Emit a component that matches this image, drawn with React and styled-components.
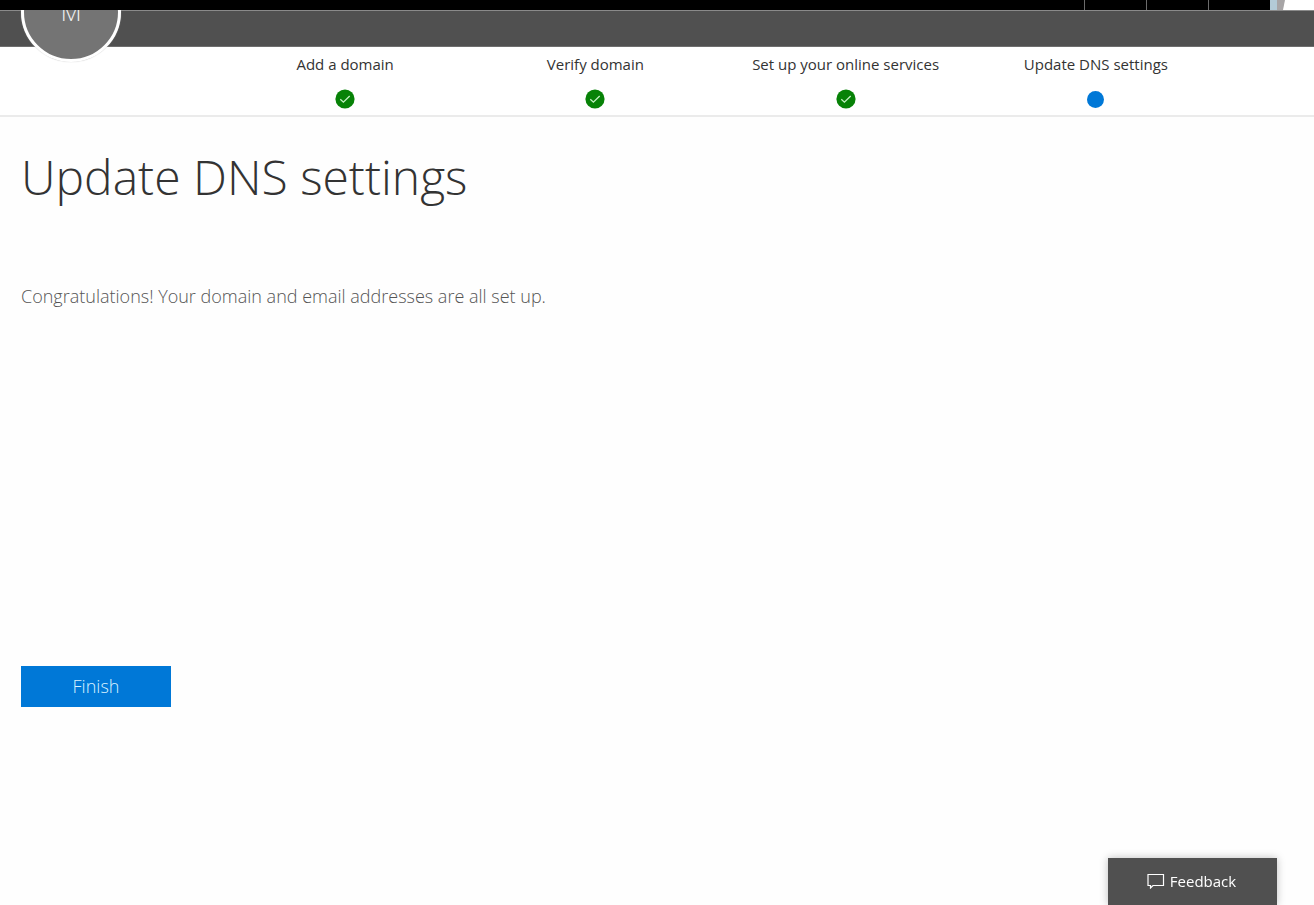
import styled, { createGlobalStyle } from "styled-components";

const steps = [
  { label: "Add a domain", done: true },
  { label: "Verify domain", done: true },
  { label: "Set up your online services", done: true },
  { label: "Update DNS settings", done: false },
];

export default function App() {
  return (
    <>
      <GlobalStyle />
      <TopBar>
        <TopCell />
        <TopCell />
        <TopCell />
        <TopPhoto viewBox="0 0 44 10" aria-hidden="true">
          <rect width="44" height="10" fill="#fff" />
          <rect width="7" height="10" fill="#b3cbd7" />
          <path d="M7 0H15Q14 5 13 10H7Z" fill="#a7a5a6" />
        </TopPhoto>
      </TopBar>
      <BrandBar>
        <Avatar>M</Avatar>
      </BrandBar>
      <Steps>
        {steps.map((step) => (
          <Step key={step.label}>
            {step.label}
            <Marker>
              {step.done ? <DoneIcon /> : <CurrentDot />}
            </Marker>
          </Step>
        ))}
      </Steps>
      <Main>
        <Title>Update DNS settings</Title>
        <Message>
          Congratulations! Your domain and email addresses are all set up.
        </Message>
        <FinishButton type="button">Finish</FinishButton>
      </Main>
      <FeedbackButton type="button">
        <FeedbackIcon />
        Feedback
      </FeedbackButton>
    </>
  );
}

function DoneIcon() {
  return (
    <svg width="20" height="20" viewBox="0 0 20 20" aria-hidden="true">
      <circle cx="10" cy="10" r="9.6" fill="#078207" />
      <path d="M5.3 10.3L8.4 13.2L14.7 7" fill="none" stroke="#c4f0c4" strokeWidth="1.3" />
    </svg>
  );
}

function FeedbackIcon() {
  return (
    <svg width="18" height="16" viewBox="0 0 18 16" aria-hidden="true">
      <path
        d="M1 1.5H16.5V12.5H6L3.5 15V12.5H1Z"
        fill="none"
        stroke="#fff"
        strokeWidth="1.2"
      />
    </svg>
  );
}

const GlobalStyle = createGlobalStyle`
  * {
    box-sizing: border-box;
  }
  body {
    margin: 0;
    background-color: #fefefe;
    color: #333;
    font-family: "Open Sans", "Noto Sans", sans-serif;
  }
`;

const TopBar = styled.div`
  position: relative;
  z-index: 2;
  display: flex;
  justify-content: flex-end;
  height: 10px;
  background-color: #000;
`;

const TopCell = styled.div`
  width: 62px;
  border-left: 1px solid #6b6b6b;
`;

const TopPhoto = styled.svg`
  width: 44px;
  height: 10px;
`;

const BrandBar = styled.div`
  position: relative;
  z-index: 1;
  height: 37px;
  background-color: #505050;
  border-top: 1px solid #8a8a8a;
  border-bottom: 1px solid #6e6e6e;
`;

/* hangs out of the bar, its top half slides under the black one */
const Avatar = styled.div`
  position: absolute;
  left: 21px;
  bottom: -16px;
  width: 100px;
  height: 100px;
  display: flex;
  align-items: center;
  justify-content: center;
  border: 3px solid #fff;
  border-radius: 50%;
  background-color: #747474;
  box-shadow: 0 0 1px #bbb;
  color: #f2f2f2;
  font-size: 24px;
  font-weight: 350;
  line-height: 24px;
`;

const Steps = styled.ol`
  display: grid;
  grid-template-columns: repeat(4, 1fr);
  margin: 0;
  padding: 7px 93px 6px 220px;
  list-style: none;
  background-color: #fff;
  border-bottom: 2px solid #ebebeb;
`;

const Step = styled.li`
  display: flex;
  flex-direction: column;
  align-items: center;
  gap: 15px;
  font-size: 15px;
  line-height: 20px;
`;

const Marker = styled.span`
  display: flex;
  align-items: center;
  justify-content: center;
  height: 20px;
`;

const CurrentDot = styled.span`
  width: 17px;
  height: 17px;
  border-radius: 50%;
  background-color: #0078d7;
`;

const Main = styled.main`
  padding: 28px 21px 80px;
`;

const Title = styled.h1`
  margin: 0;
  font-size: 48px;
  font-weight: 350;
  line-height: 64px;
`;

const Message = styled.p`
  margin: 75px 0 0;
  color: #555;
  font-size: 18px;
  font-weight: 300;
  line-height: 24px;
`;

const FinishButton = styled.button`
  display: block;
  width: 150px;
  height: 41px;
  margin-top: 358px;
  padding: 0 0 2px;
  border: none;
  background-color: #0078d7;
  color: #d8f2ff;
  font-family: inherit;
  font-size: 18px;
  font-weight: 300;
  cursor: pointer;
`;

const FeedbackButton = styled.button`
  position: fixed;
  right: 37px;
  bottom: 0;
  display: flex;
  align-items: center;
  justify-content: center;
  gap: 5px;
  width: 169px;
  height: 47px;
  padding: 0 2px 2px 0;
  border: none;
  background-color: #505050;
  box-shadow: 0 0 8px rgba(0, 0, 0, 0.25);
  color: #fff;
  font-family: inherit;
  font-size: 15px;
  cursor: pointer;
`;
